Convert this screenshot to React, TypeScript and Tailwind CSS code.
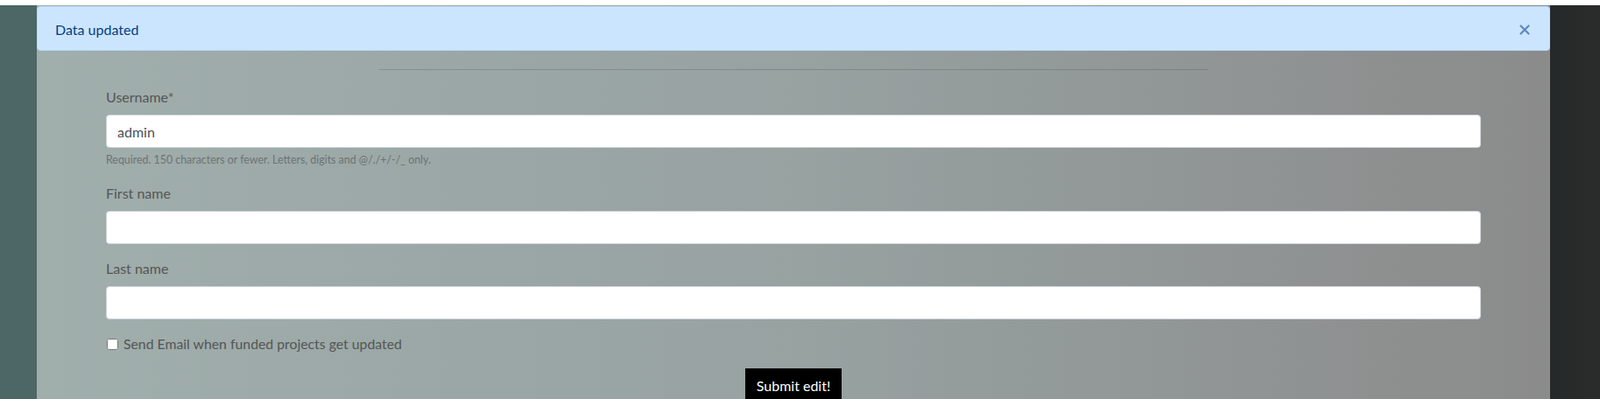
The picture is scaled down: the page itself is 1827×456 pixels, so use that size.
export default function App() {
  return (
    <div className="h-[456px] overflow-hidden bg-white pt-[6px] font-['Lato',sans-serif]">
      <div className="flex h-full">
        {/* left rail */}
        <div className="w-[42px] shrink-0 bg-[#4d6666]" />

        {/* main panel */}
        <div className="flex-1 bg-gradient-to-r from-[#a0aeac] via-[#97a2a1] to-[#8b8b8b] pt-px">
          {/* alert */}
          <div className="flex h-[51px] items-center justify-between rounded border border-[#b8daff] bg-[#cce5ff] pl-5 pr-4 pt-[2px] text-base text-[#004085]">
            <span>Data updated</span>
            <button className="flex h-6 w-6 items-center justify-center text-[#5e89bc]">
              <svg width="12" height="12" viewBox="0 0 12 12" fill="none" stroke="currentColor" strokeWidth="2.2" strokeLinecap="round">
                <path d="M1.5 1.5l9 9M10.5 1.5l-9 9" />
              </svg>
            </button>
          </div>

          <div className="mx-auto mt-[21px] h-px w-[946px] bg-black/15" />

          {/* form */}
          <form className="px-[79px] pt-[19px]">
            <div className="mb-4">
              <label className="mb-2 block text-base leading-6 text-[#555]">Username*</label>
              <input
                type="text"
                defaultValue="admin"
                className="block h-[38px] w-full rounded border border-[#ced4da] bg-white px-3 text-base text-[#495057] outline-none"
              />
              <small className="mt-1 block text-[12.4px] leading-[20px] text-[#6c7373]">
                Required. 150 characters or fewer. Letters, digits and @/./+/-/_ only.
              </small>
            </div>

            <div className="mb-4">
              <label className="mb-2 block text-base leading-6 text-[#555]">First name</label>
              <input
                type="text"
                className="block h-[38px] w-full rounded border border-[#ced4da] bg-white px-3 text-base text-[#495057] outline-none"
              />
            </div>

            <div className="mb-4">
              <label className="mb-2 block text-base leading-6 text-[#555]">Last name</label>
              <input
                type="text"
                className="block h-[38px] w-full rounded border border-[#ced4da] bg-white px-3 text-base text-[#495057] outline-none"
              />
            </div>

            <div className="mb-4 flex items-center pl-px">
              <input type="checkbox" className="m-0 mr-[6px] h-[13px] w-[13px]" />
              <label className="text-[15.8px] leading-6 text-[#555]">Send Email when funded projects get updated</label>
            </div>

            <div className="flex justify-center">
              <button type="button" className="bg-black px-[13px] py-2 text-base leading-6 text-white">
                Submit edit!
              </button>
            </div>
          </form>
        </div>

        {/* right rail */}
        <div className="w-[57px] shrink-0 bg-gradient-to-r from-[#252929] to-[#2a2c2b]" />
      </div>
    </div>
  );
}
